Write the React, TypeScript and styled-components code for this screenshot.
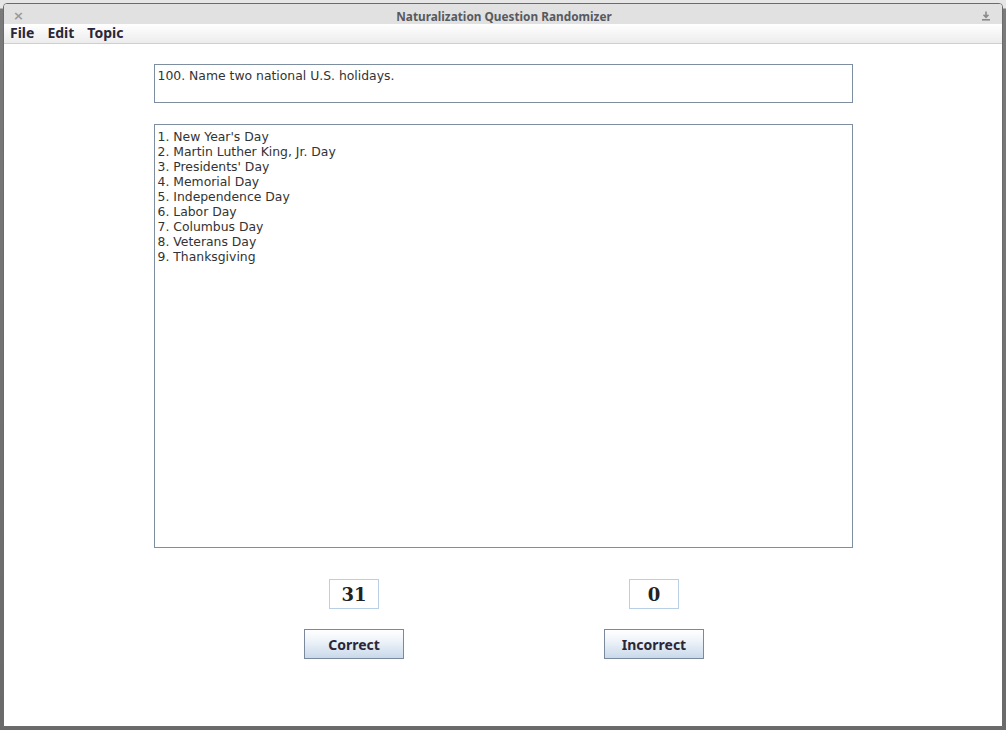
import styled, { createGlobalStyle } from 'styled-components'

const GlobalStyle = createGlobalStyle`
  html, body {
    margin: 0;
    padding: 0;
    background: #6f6f6f;
  }
  * {
    box-sizing: border-box;
  }
`

const answers = [
  "1. New Year's Day",
  '2. Martin Luther King, Jr. Day',
  "3. Presidents' Day",
  '4. Memorial Day',
  '5. Independence Day',
  '6. Labor Day',
  '7. Columbus Day',
  '8. Veterans Day',
  '9. Thanksgiving',
]

const counters = [
  { score: 31, label: 'Correct' },
  { score: 0, label: 'Incorrect' },
]

export default function App() {
  return (
    <>
      <GlobalStyle />
      <Desktop>
        <Window>
          <TitleBar>
            <CloseGlyph>×</CloseGlyph>
            <Title>Naturalization Question Randomizer</Title>
            <PinIcon width="10" height="10" viewBox="0 0 10 10">
              <path d="M5 0.5 V6 M2.5 3.8 L5 6.3 L7.5 3.8" stroke="#8a8a8a" strokeWidth="1.6" fill="none" />
              <rect x="1" y="8" width="8" height="1.6" fill="#8a8a8a" />
            </PinIcon>
          </TitleBar>
          <MenuBar>
            <MenuItem>File</MenuItem>
            <MenuItem>Edit</MenuItem>
            <MenuItem>Topic</MenuItem>
          </MenuBar>
          <Content>
            <QuestionBox>100. Name two national U.S. holidays.</QuestionBox>
            <AnswerBox>
              {answers.map((a) => (
                <AnswerLine key={a}>{a}</AnswerLine>
              ))}
            </AnswerBox>
            <ScoreGrid>
              {counters.map((c) => (
                <ScoreColumn key={c.label}>
                  <ScoreField>{c.score}</ScoreField>
                  <ActionButton>{c.label}</ActionButton>
                </ScoreColumn>
              ))}
            </ScoreGrid>
          </Content>
        </Window>
      </Desktop>
    </>
  )
}

const Desktop = styled.div`
  width: 1006px;
  height: 730px;
  padding: 3px 3px 3px 3px;
  background: linear-gradient(to bottom, #e6e6e6 0px, #e6e6e6 8px, #7a7a7a 9px, #6a6a6a 100%);
  display: flex;
`

const Window = styled.div`
  flex: 1;
  display: flex;
  flex-direction: column;
  background: #ffffff;
  border: 1px solid #6b6b6b;
  border-radius: 4px 4px 0 0;
  overflow: hidden;
`

const TitleBar = styled.div`
  height: 20px;
  flex-shrink: 0;
  display: flex;
  align-items: center;
  justify-content: space-between;
  padding: 3px 11px 0 9px;
  background: #e1e1e1;
`

const CloseGlyph = styled.span`
  font-family: 'DejaVu Sans', sans-serif;
  font-size: 13px;
  font-weight: bold;
  color: #9a9a9a;
  width: 10px;
  line-height: 1;
`

const Title = styled.span`
  font-family: 'Noto Sans', 'Open Sans', sans-serif;
  font-size: 11.8px;
  font-weight: bold;
  color: #58595e;
  margin-left: 4px;
`

const PinIcon = styled.svg`
  display: block;
`

const MenuBar = styled.div`
  height: 20px;
  flex-shrink: 0;
  display: flex;
  align-items: center;
  gap: 13px;
  padding: 0 6px 2px;
  background: linear-gradient(to bottom, #ffffff, #ececec);
  border-bottom: 1px solid #cfcfcf;
`

const MenuItem = styled.span`
  font-family: 'Noto Sans', 'Open Sans', sans-serif;
  font-size: 14px;
  font-weight: bold;
  color: #2a2738;
  line-height: 16px;
`

const Content = styled.div`
  flex: 1;
  display: flex;
  flex-direction: column;
  align-items: center;
  padding-top: 20px;
`

const textFont = `
  font-family: 'DejaVu Sans', 'Verdana', sans-serif;
  font-size: 12.4px;
  color: #333333;
`

const QuestionBox = styled.div`
  ${textFont}
  width: 699px;
  height: 39px;
  border: 1px solid #7d8ea0;
  padding: 3px 3px;
  line-height: 15px;
`

const AnswerBox = styled.div`
  ${textFont}
  width: 699px;
  height: 424px;
  margin-top: 21px;
  border: 1px solid #7d8ea0;
  padding: 4px 3px;
`

const AnswerLine = styled.div`
  line-height: 15px;
`

const ScoreGrid = styled.div`
  width: 600px;
  margin-top: 31px;
  margin-left: 2px;
  display: grid;
  grid-template-columns: 300px 300px;
`

const ScoreColumn = styled.div`
  display: flex;
  flex-direction: column;
  align-items: center;
  gap: 20px;
`

const ScoreField = styled.div`
  width: 50px;
  height: 30px;
  border: 1px solid #b8cfe5;
  display: flex;
  align-items: center;
  justify-content: center;
  font-family: 'DejaVu Serif', serif;
  font-size: 18px;
  font-weight: bold;
  color: #222222;
`

const ActionButton = styled.button`
  width: 100px;
  height: 30px;
  border: 1px solid #7a8a9c;
  border-radius: 0;
  background: linear-gradient(to bottom, #ffffff 0%, #f0f5fa 35%, #c9d9ea 100%);
  font-family: 'Noto Sans', 'Open Sans', sans-serif;
  font-size: 14px;
  font-weight: bold;
  color: #2a2738;
  padding: 0;
  cursor: pointer;
`
